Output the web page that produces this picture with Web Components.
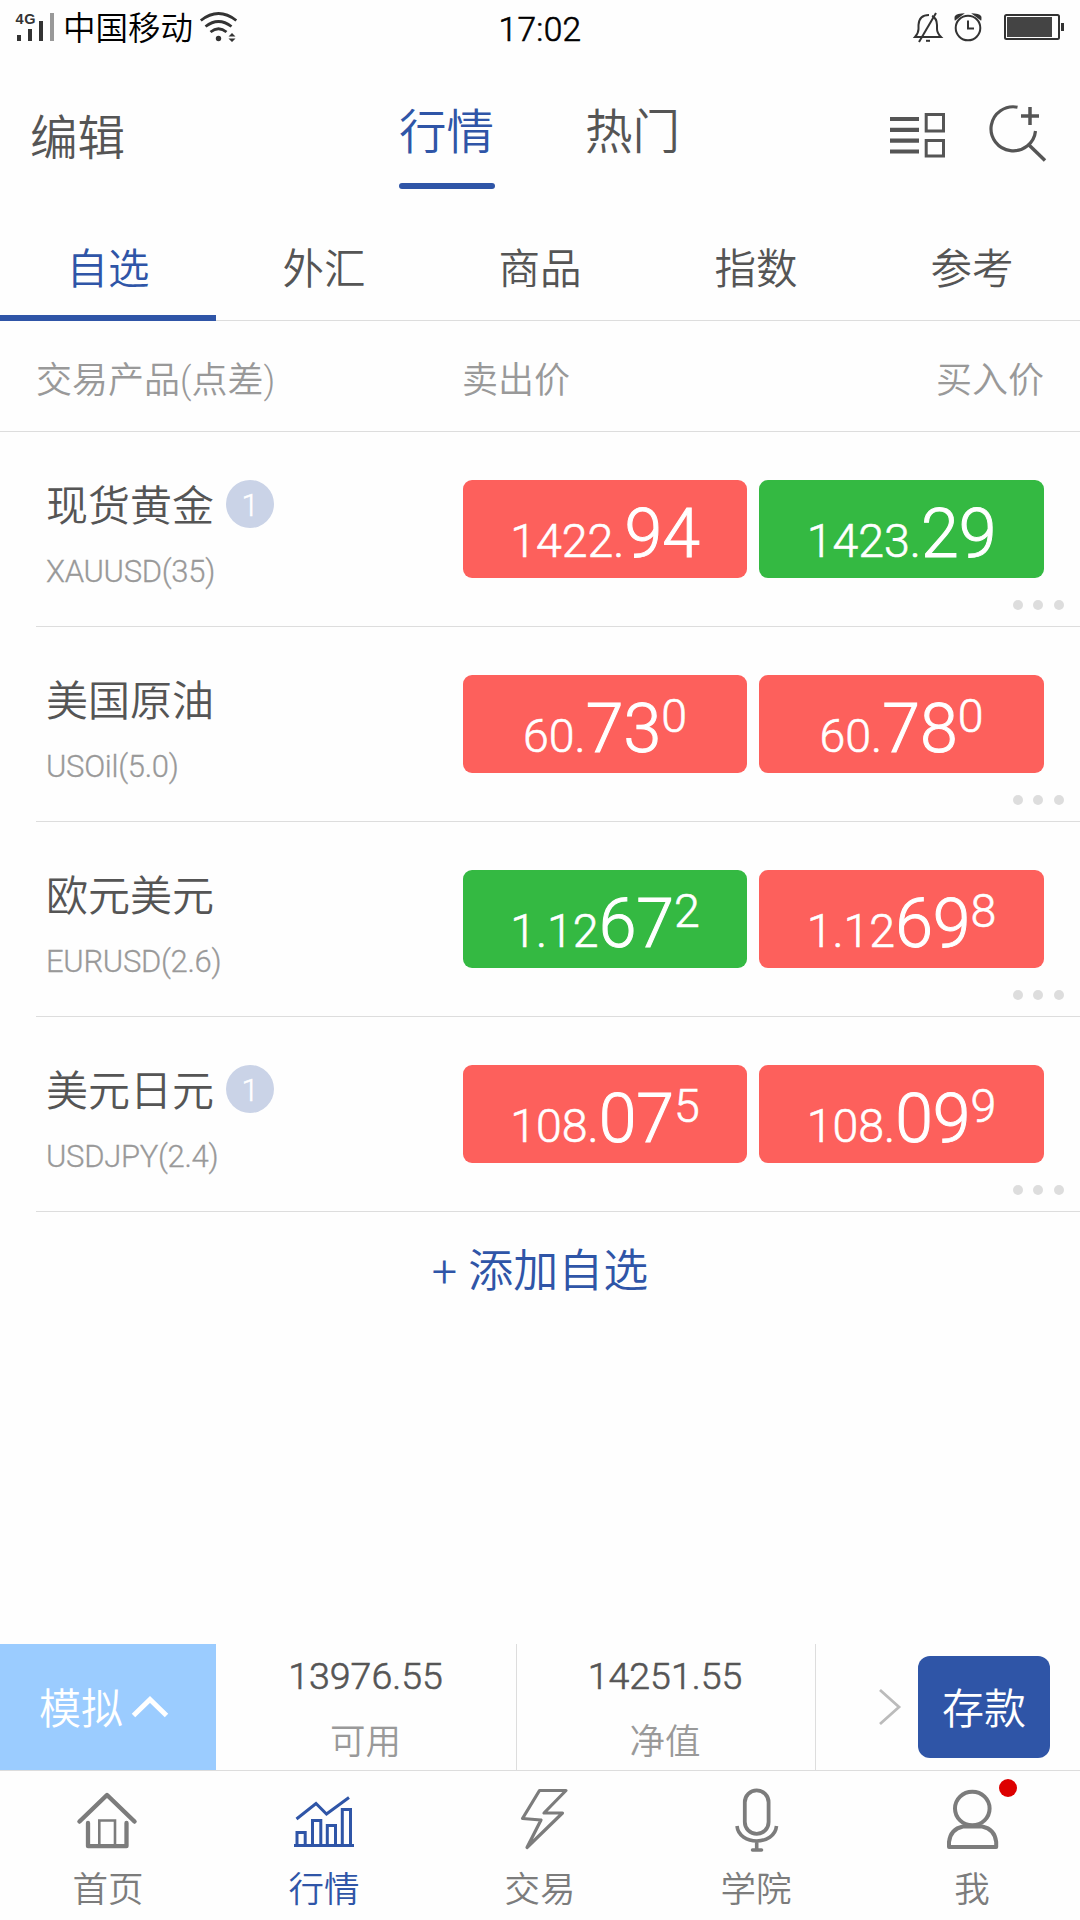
<!DOCTYPE html>
<html lang="zh-CN">
<head>
<meta charset="utf-8">
<title>行情</title>
<style>
    html, body {
        margin: 0;
        padding: 0;
    }
    body {
        width: 1080px;
        height: 1920px;
        overflow: hidden;
        background: #fefefe;
        color: #555;
        font-family: Roboto, "Noto Sans CJK SC", sans-serif;
        font-weight: 350;
        line-height: 1;
        --blue: #2f55a7;
        --line: #ddd;
        --muted: #999;
        --up: #34b942;
        --down: #fd605c;
    }
</style>
</head>
<body>
<market-page></market-page>

<template id="status_bar_tpl">
  <style>
      :host {
          display: grid;
          grid-template-columns: 1fr auto 1fr;
          align-items: center;
          height: 56px;
          color: #000;
      }
      svg { display: block; }
      .left, .right { display: flex; align-items: center; height: 56px; }
      .right { justify-content: flex-end; }
      .carrier { padding-top: 3px; font-size: 32.5px; margin-left: 4px; }
      .time { padding-top: 3px; font-size: 33.5px; letter-spacing: .3px; -webkit-text-stroke: .6px; }
      .wifi { margin-left: 5px; }
  </style>
  <div class="left">
    <svg width="59" height="56" viewBox="0 0 59 56">
      <text x="15.5" y="24" font-family="Liberation Sans" font-size="14.5" font-weight="700" fill="#333" textLength="20">4G</text>
      <path d="M19 35v6M30 29v12M41 21v20" stroke="#333" stroke-width="4"/>
      <path d="M52 13v28" stroke="#999" stroke-width="4"/>
    </svg>
    <span class="carrier">中国移动</span>
    <svg class="wifi" width="42" height="56" viewBox="198 0 42 56">
      <g fill="none" stroke="#333" stroke-width="2.8">
        <path d="M200.800 20.500Q218.500 6.500 236.300 20.500"/>
        <path d="M205.500 26.500Q218.500 16.500 231.500 26.500"/>
        <path d="M210.500 32Q218.500 25.500 226.500 32"/>
      </g>
      <circle cx="218.500" cy="38.500" r="2.700" fill="#333"/>
      <path d="M228.500 36.500h7l-3.500-3.500zM228.500 38.500h7l-3.500 3.500z" fill="#333"/>
    </svg>
  </div>
  <span class="time">17:02</span>
  <div class="right">
    <svg width="170" height="56" viewBox="910 0 170 56" fill="none" stroke="#333" stroke-width="2">
      <path d="M929 15q-10 0-10.500 10v4q0 4-3.500 8h26q-4-4-4-8v-4q-.2-7-5-9"/>
      <path d="M936 13L919 42"/>
      <path d="M926 40.800h4"/>
      <circle cx="968" cy="28" r="12.300"/>
      <path d="M968 20.500v8h6"/>
      <path d="M955.500 19q-1-4 6-4.500zM980.500 19q1-4-6-4.500z" fill="#333"/>
      <rect x="1005" y="15" width="54" height="24" rx="1.500"/>
      <rect x="1007" y="17" width="45" height="20" fill="#444" stroke="none"/>
      <path d="M1062.500 23v8" stroke-width="3"/>
    </svg>
  </div>
</template>

<template id="app_header_tpl">
  <style>
      :host {
          display: grid;
          grid-template-columns: 399px 1fr auto;
          height: 148px;
          font-size: 47.5px;
      }
      .edit { padding: 60px 0 0 30px; }
      .switch { display: flex; gap: 90px; padding-top: 54px; }
      .current {
          height: 79px;
          width: 96px;
          color: var(--blue);
          box-sizing: border-box;
      }
      .current::after {
          content: "";
          display: block;
          height: 6px;
          margin-top: 25.500px;
          border-radius: 3px;
          background: var(--blue);
      }
      svg { display: block; margin: 44px 30px 0 0; }
  </style>
  <div class="edit">编辑</div>
  <div class="switch">
    <div class="current">行情</div>
    <div>热门</div>
  </div>
  <svg width="162" height="64" viewBox="888 100 162 64" fill="none" stroke="#555">
    <path d="M890 119h29M890 129.800h29M890 140.600h29M890 151.500h29" stroke-width="4.200"/>
    <rect x="926.200" y="114.500" width="17.300" height="16.500" stroke-width="3"/>
    <rect x="926.200" y="140.500" width="17.300" height="15.500" stroke-width="3"/>
    <path d="M1017.500 107.200A22.300 22 0 1 0 1035.500 131" stroke-width="3.200"/>
    <path d="M1029 145l16 15.500" stroke-width="3.500"/>
    <path d="M1021 116h18M1030 107v18" stroke-width="3.500"/>
  </svg>
</template>

<template id="market_tabs_tpl">
  <style>
      :host {
          display: flex;
          height: 117px;
          box-sizing: border-box;
          border-bottom: 1px solid var(--line);
          font-size: 41.500px;
      }
      div {
          flex: 1;
          height: 117px;
          box-sizing: border-box;
          padding-top: 44.500px;
          text-align: center;
      }
      .active {
          color: var(--blue);
          border-bottom: 6px solid var(--blue);
      }
  </style>
</template>

<template id="list_head_tpl">
  <style>
      :host {
          display: grid;
          grid-template-columns: 426px 1fr 1fr;
          align-items: center;
          height: 111px;
          box-sizing: border-box;
          padding: 9px 36px 0;
          border-bottom: 1px solid var(--line);
          color: var(--muted);
          font-size: 36px;
      }
      .buy { text-align: right; }
  </style>
  <span>交易产品(点差)</span>
  <span class="sell">卖出价</span>
  <span class="buy">买入价</span>
</template>

<template id="price_box_tpl">
  <style>
      :host {
          display: block;
          height: 98px;
          border-radius: 9px;
          background: var(--down);
          color: #fff;
          font-size: 46.500px;
          line-height: 98px;
          text-align: center;
          white-space: nowrap;
          overflow: hidden;
      }
      :host([dir-up]) { background: var(--up); }
      p { margin: 0; height: 98px; padding-top: 5px; -webkit-text-stroke: .6px; }
      .big { font-size: 68px; -webkit-text-stroke: 1px; }
      .sup { position: relative; top: -20px; }
  </style>
  <p><span class="small"></span><span class="big"></span><span class="sup"></span></p>
</template>

<template id="quote_row_tpl">
  <style>
      :host {
          display: grid;
          grid-template-columns: 415px 284px 285px;
          column-gap: 12px;
          position: relative;
          height: 195px;
          box-sizing: border-box;
          margin-left: 36px;
          padding-top: 48px;
          border-bottom: 1px solid var(--line);
      }
      .info { padding-left: 10px; }
      .name { display: flex; align-items: center; height: 48px; font-size: 42px; }
      .title { padding-top: 5px; }
      .badge {
          width: 48px;
          height: 48px;
          margin-left: 12px;
          border-radius: 50%;
          background: #cad3e7;
          color: #fff;
          font-size: 31px;
          line-height: 51px;
          text-align: center;
          -webkit-text-stroke: .5px;
      }
      .code { margin-top: 28px; color: var(--muted); font-size: 31px; letter-spacing: -.3px; -webkit-text-stroke: .3px; }
      .more { position: absolute; right: 16.500px; bottom: 16px; display: flex; gap: 10.500px; }
      .more i { width: 10px; height: 10px; border-radius: 50%; background: var(--line); }
  </style>
  <div class="info">
    <div class="name"><span class="title"></span></div>
    <div class="code"></div>
  </div>
  <price-box class="sell"></price-box>
  <price-box class="buy"></price-box>
  <div class="more"><i></i><i></i><i></i></div>
</template>

<template id="account_bar_tpl">
  <style>
      :host {
          display: grid;
          grid-template-columns: 217px 300px 299px 1fr;
          height: 127px;
          box-sizing: border-box;
          border-bottom: 1px solid var(--line);
      }
      svg { display: block; }
      .mode {
          display: flex;
          align-items: center;
          padding-left: 39px;
          margin-right: 1px;
          gap: 7px;
          background: #9bccff;
          color: #fff;
          font-size: 42px;
      }
      .mode span { padding-top: 5px; }
      .cell { padding-right: 2px; border-right: 1px solid var(--line); text-align: center; }
      .num { padding-top: 14px; font-size: 37.500px; -webkit-text-stroke: .6px; }
      .label { padding-top: 29px; color: var(--muted); font-size: 35.500px; }
      .end { display: flex; align-items: center; justify-content: flex-end; padding-right: 30px; gap: 16.500px; }
      .deposit {
          width: 132px;
          height: 102px;
          border-radius: 12px;
          background: var(--blue);
          color: #fff;
          font-size: 42px;
          line-height: 108px;
          text-align: center;
      }
  </style>
  <div class="mode">
    <span>模拟</span>
    <svg width="40" height="30" viewBox="130 1693 40 30" fill="none" stroke="#fff" stroke-width="5">
      <path d="M133.500 1716.500l16.500-16 16.500 16"/>
    </svg>
  </div>
  <div class="cell"><div class="num">13976.55</div><div class="label">可用</div></div>
  <div class="cell"><div class="num">14251.55</div><div class="label">净值</div></div>
  <div class="end">
    <svg width="24" height="40" viewBox="878 1687 24 40" fill="none" stroke="#bbb" stroke-width="2.800">
      <path d="M880 1690l19 17-19 17"/>
    </svg>
    <div class="deposit">存款</div>
  </div>
</template>

<template id="nav_item_tpl">
  <style>
      :host {
          display: flex;
          flex-direction: column;
          align-items: center;
          flex: 1;
          color: #7c7c7c;
          font-size: 35.500px;
      }
      :host([active]) { color: var(--blue); }
      .label { margin-top: 15px; }
      ::slotted(svg) { display: block; }
  </style>
  <slot></slot>
  <span class="label"></span>
</template>

<template id="market_page_tpl">
  <style>
      :host { display: flex; flex-direction: column; height: 1920px; }
      .add {
          margin-top: 37px;
          color: var(--blue);
          font-size: 45px;
          text-align: center;
      }
      .space { flex: 1; }
      nav { display: flex; height: 149px; }
      svg { fill: none; stroke: currentColor; stroke-linecap: round; stroke-linejoin: round; }
  </style>
  <status-bar></status-bar>
  <app-header></app-header>
  <market-tabs tabs="自选,外汇,商品,指数,参考"></market-tabs>
  <list-head></list-head>
  <quote-row name="现货黄金" code="XAUUSD(35)" badge="1" sell="1422.|94|" buy="1423.|29|" up="buy"></quote-row>
  <quote-row name="美国原油" code="USOil(5.0)" sell="60.|73|0" buy="60.|78|0"></quote-row>
  <quote-row name="欧元美元" code="EURUSD(2.6)" sell="1.12|67|2" buy="1.12|69|8" up="sell"></quote-row>
  <quote-row name="美元日元" code="USDJPY(2.4)" badge="1" sell="108.|07|5" buy="108.|09|9"></quote-row>
  <div class="add">+ 添加自选</div>
  <div class="space"></div>
  <account-bar></account-bar>
  <nav>
    <nav-item label="首页">
      <svg width="216" height="87" viewBox="0 1771 216 87">
        <path d="M79.500 1821.500L107 1795l27.500 26.500" stroke-width="4.500"/>
        <path d="M88 1823v23.200h38.500V1823" stroke-width="4.300"/>
        <path d="M99.300 1846v-25.500h15.700v25.500" stroke-width="2.600" stroke-linejoin="miter"/>
      </svg>
    </nav-item>
    <nav-item label="行情" active>
      <svg width="216" height="87" viewBox="216 1771 216 87" style="stroke-linecap: butt; stroke-linejoin: miter">
        <path d="M294 1845.500h60" stroke-width="3"/>
        <path d="M297 1845v-12.500h8.200v12.500M312.500 1845v-24.500h8.300v24.500M327.300 1845v-19.500h8.200v19.500M342.300 1845v-35.500h8.200v35.500" stroke-width="3"/>
        <path d="M296.500 1819l19.500-15.500 10.500 10.500 22.500-16.500" stroke-width="3"/>
      </svg>
    </nav-item>
    <nav-item label="交易">
      <svg width="216" height="87" viewBox="432 1771 216 87">
        <path d="M539.500 1790.500h26.500l-22 22.500h18.500l-35.500 34.500 14-27.500-18.500-1.500z" stroke-width="3.200"/>
      </svg>
    </nav-item>
    <nav-item label="学院">
      <svg width="216" height="87" viewBox="648 1771 216 87" style="stroke-linecap: butt">
        <rect x="744.800" y="1790.300" width="23.800" height="43.500" rx="11.900" stroke-width="3.800"/>
        <path d="M737 1826c2 20 37.500 20 39.500 0M756.700 1841v9" stroke-width="3.600"/>
        <path d="M752.500 1850h9" stroke-width="3.500" stroke-linecap="round"/>
      </svg>
    </nav-item>
    <nav-item label="我">
      <svg width="216" height="87" viewBox="864 1771 216 87">
        <ellipse cx="972.300" cy="1808.500" rx="17.300" ry="16.800" stroke-width="4"/>
        <path d="M949 1847h47.200v-5q-1.500-13-14-15.500h-19.200q-12.500 2.500-14 15.500z" stroke-width="4"/>
        <circle cx="1008" cy="1788" r="9" fill="#d00" stroke="none"/>
      </svg>
    </nav-item>
  </nav>
</template>

<script>
    class TemplateElement extends HTMLElement {
        constructor() {
            super();
            this.attachShadow({ mode: 'open' });
            const id = this.localName.replace('-', '_') + '_tpl';
            const tpl = document.getElementById(id);
            this.shadowRoot.appendChild(tpl.content.cloneNode(true));
        }
        find(selector) {
            return this.shadowRoot.querySelector(selector);
        }
    }

    class StatusBar extends TemplateElement {}
    class AppHeader extends TemplateElement {}
    class ListHead extends TemplateElement {}
    class AccountBar extends TemplateElement {}
    class MarketPage extends TemplateElement {}

    class MarketTabs extends TemplateElement {
        connectedCallback() {
            this.getAttribute('tabs').split(',').forEach((label, index) => {
                const tab = document.createElement('div');
                tab.textContent = label;
                tab.classList.toggle('active', index === 0);
                this.shadowRoot.appendChild(tab);
            });
        }
    }

    // value is "small|big|raised"
    class PriceBox extends TemplateElement {
        static get observedAttributes() {
            return ['value'];
        }
        attributeChangedCallback(name, oldValue, newValue) {
            const [small, big, sup] = newValue.split('|');
            this.find('.small').textContent = small;
            this.find('.big').textContent = big;
            this.find('.sup').textContent = sup;
        }
    }

    class QuoteRow extends TemplateElement {
        connectedCallback() {
            this.find('.title').textContent = this.getAttribute('name');
            this.find('.code').textContent = this.getAttribute('code');
            if (this.hasAttribute('badge')) {
                const badge = document.createElement('span');
                badge.className = 'badge';
                badge.textContent = this.getAttribute('badge');
                this.find('.name').appendChild(badge);
            }
            for (const side of ['sell', 'buy']) {
                const box = this.find('.' + side);
                box.setAttribute('value', this.getAttribute(side));
                box.toggleAttribute('dir-up', this.getAttribute('up') === side);
            }
        }
    }

    class NavItem extends TemplateElement {
        connectedCallback() {
            this.find('.label').textContent = this.getAttribute('label');
        }
    }

    customElements.define('status-bar', StatusBar);
    customElements.define('app-header', AppHeader);
    customElements.define('market-tabs', MarketTabs);
    customElements.define('list-head', ListHead);
    customElements.define('price-box', PriceBox);
    customElements.define('quote-row', QuoteRow);
    customElements.define('account-bar', AccountBar);
    customElements.define('nav-item', NavItem);
    customElements.define('market-page', MarketPage);
</script>
</body>
</html>
